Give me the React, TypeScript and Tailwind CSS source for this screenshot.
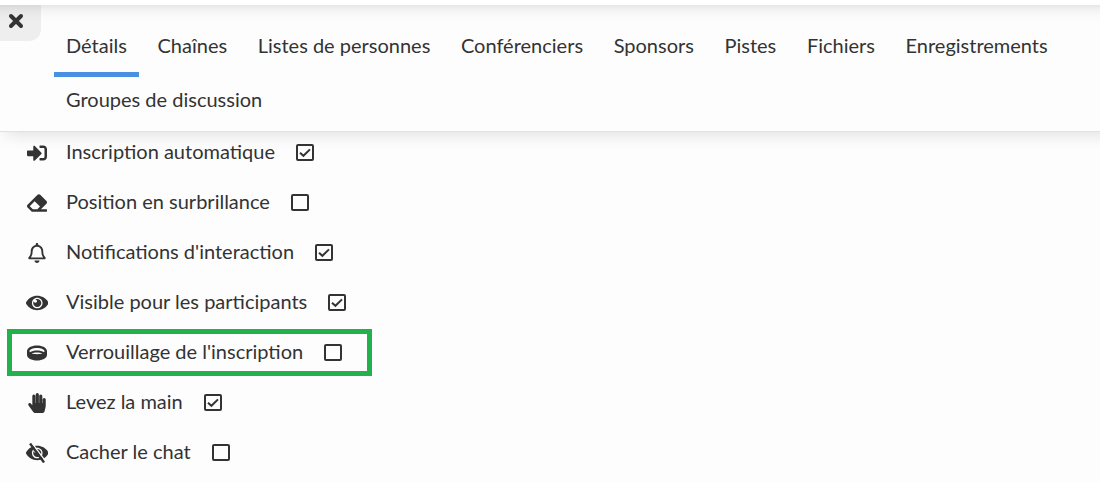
import { Fragment, useState } from "react";
import type { ComponentType } from "react";
import {
  FaEraser,
  FaHandPaper,
  FaRegBell,
  FaRing,
  FaSignInAlt,
} from "react-icons/fa";

const tabs = [
  "Détails",
  "Chaînes",
  "Listes de personnes",
  "Conférenciers",
  "Sponsors",
  "Pistes",
  "Fichiers",
  "Enregistrements",
  "Groupes de discussion",
];

const eyePath =
  "M569.354 231.631C512.969 135.949 407.81 72 288 72 168.14 72 63.004 135.994 6.646 231.631a47.999 47.999 0 0 0 0 48.739C63.031 376.051 168.19 440 288 440c119.86 0 224.996-63.994 281.354-159.631a47.997 47.997 0 0 0 0-48.738zM288 392c-75.162 0-136-60.827-136-136 0-75.162 60.826-136 136-136 75.162 0 136 60.826 136 136 0 75.162-60.826 136-136 136zm104-136c0 57.438-46.562 104-104 104s-104-46.562-104-104c0-17.708 4.431-34.379 12.236-48.973l-.001.032c0 23.651 19.173 42.823 42.824 42.823s42.824-19.173 42.824-42.823c0-23.651-19.173-42.823-42.824-42.823l-.032.001C253.621 156.431 270.292 152 288 152c57.438 0 104 46.562 104 104z";

type IconProps = { className?: string };

function EyeIcon({ className }: IconProps) {
  return (
    <svg viewBox="0 0 576 512" className={className} fill="currentColor" aria-hidden="true">
      <path d={eyePath} />
    </svg>
  );
}

function EyeSlashIcon({ className }: IconProps) {
  return (
    <svg viewBox="0 0 576 512" className={className} fill="currentColor" aria-hidden="true">
      <path d={eyePath} />
      <path d="M152 0 510 476" stroke="#fdfdfd" strokeWidth="34" />
      <path d="M104 12 462 500" stroke="currentColor" strokeWidth="60" />
    </svg>
  );
}

type Option = {
  id: string;
  label: string;
  icon: ComponentType<IconProps>;
  checked: boolean;
  highlighted?: boolean;
};

const options: Option[] = [
  { id: "auto", label: "Inscription automatique", icon: FaSignInAlt, checked: true },
  { id: "position", label: "Position en surbrillance", icon: FaEraser, checked: false },
  { id: "notifications", label: "Notifications d'interaction", icon: FaRegBell, checked: true },
  { id: "visible", label: "Visible pour les participants", icon: EyeIcon, checked: true },
  { id: "lock", label: "Verrouillage de l'inscription", icon: FaRing, checked: false, highlighted: true },
  { id: "hand", label: "Levez la main", icon: FaHandPaper, checked: true },
  { id: "chat", label: "Cacher le chat", icon: EyeSlashIcon, checked: false },
];

function OptionRow({ option }: { option: Option }) {
  const [checked, setChecked] = useState(option.checked);
  const Icon = option.icon;
  return (
    <li
      className={`flex h-[37px] w-fit items-center pr-[25px] pl-[14px] ${
        option.highlighted ? "outline-5 outline-[#22b14c]" : ""
      }`}
    >
      <span className="flex w-[22px] justify-center">
        <Icon className="h-5 w-auto shrink-0" aria-hidden="true" />
      </span>
      <label htmlFor={option.id} className="pr-[21px] pb-[3px] pl-[18px]">
        {option.label}
      </label>
      <span className="grid h-[17px] w-[18px] place-items-center">
        <input
          id={option.id}
          type="checkbox"
          checked={checked}
          onChange={() => setChecked(!checked)}
          className="col-start-1 row-start-1 h-[17px] w-[18px] appearance-none rounded-[2px] border-2 border-[#333333]"
        />
        {checked && (
          <svg
            viewBox="0 0 12 12"
            className="pointer-events-none col-start-1 row-start-1 size-3"
            fill="none"
            stroke="currentColor"
            strokeWidth="2"
            aria-hidden="true"
          >
            <path d="M1 5.8 4.4 8.8 11 2.4" />
          </svg>
        )}
      </span>
    </li>
  );
}

export default function App() {
  const [active, setActive] = useState("Détails");
  return (
    <div className="min-h-screen overflow-hidden bg-[#fdfdfd] font-['Lato',sans-serif] text-xl leading-6 text-[#333333]">
      <div className="h-[5px] bg-white" />
      <header className="-mr-5 flex items-start border-b border-[#e2e2e2] bg-[linear-gradient(to_bottom,#e6e6e6_0px,#f3f3f3_5px,#fafafa_11px,#fdfdfd_18px)] shadow-[0_8px_16px_-6px_rgba(0,0,0,0.13)]">
        <button
          type="button"
          aria-label="Fermer"
          className="flex h-9 w-[41px] shrink-0 items-center rounded-br-xl bg-black/6 pb-1 pl-2"
        >
          <svg
            viewBox="0 0 16 16"
            className="size-4"
            stroke="currentColor"
            strokeWidth="4"
            strokeLinecap="round"
            aria-hidden="true"
          >
            <path d="M3 3 13 13M13 3 3 13" />
          </svg>
        </button>
        <nav className="pt-[18px] pr-5 pl-[13px] text-lg leading-6">
          {tabs.map((tab) => (
            <Fragment key={tab}>
              <button
                type="button"
                onClick={() => setActive(tab)}
                className={`mr-[2px] h-[54px] border-b-5 px-3 pb-[6px] align-top text-xl leading-6 ${
                  tab === active ? "border-[#4a90e2]" : "border-transparent"
                }`}
              >
                {tab}
              </button>{" "}
            </Fragment>
          ))}
        </nav>
      </header>
      <ul className="ml-3 flex flex-col gap-[13px] pt-[2px]">
        {options.map((option) => (
          <OptionRow key={option.id} option={option} />
        ))}
      </ul>
    </div>
  );
}
